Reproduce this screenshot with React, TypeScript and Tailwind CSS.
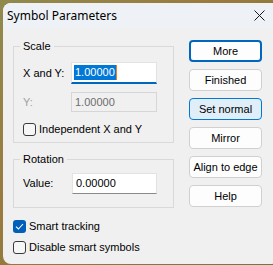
import React from "react";

const btnBase =
  "h-[22px] w-full rounded-[4px] border text-[11px] leading-none text-black flex items-center justify-center";

function Button({ label, kind }: { label: string; kind?: "default" | "hover" }) {
  const look =
    kind === "default"
      ? "bg-[#fdfdfd] border-[2px] border-[#0067c0]"
      : kind === "hover"
      ? "bg-[#e0eef9] border-[#0078d4]"
      : "bg-[#fdfdfd] border-[#d0d0d0]";
  return <button className={`${btnBase} ${look}`}>{label}</button>;
}

function Check({ checked, label }: { checked?: boolean; label: string }) {
  return (
    <label className="flex items-center h-[13px] gap-[3px]">
      {checked ? (
        <span className="w-[13px] h-[13px] rounded-[3px] bg-[#005fb8] flex items-center justify-center">
          <svg width="9" height="7" viewBox="0 0 9 7" fill="none">
            <path d="M1 3.6 L3.4 6 L8 1" stroke="white" strokeWidth="1.1" />
          </svg>
        </span>
      ) : (
        <span className="w-[13px] h-[13px] rounded-[3px] border border-[#3a3a3a] bg-[#f6f6f6]" />
      )}
      <span className="text-[11px] leading-none text-black">{label}</span>
    </label>
  );
}

export default function App() {
  return (
    <div className="w-[273px] h-[265px] overflow-hidden bg-[linear-gradient(135deg,#8f8a4c,#9b7a3d_40%,#6f7a3e)] pl-[3px] pt-[3px] font-['Liberation_Sans',Arial,sans-serif]">
      <div className="w-[276px] h-[261px] rounded-[8px] overflow-hidden bg-[#f0f0f0] flex flex-col">
        <div className="h-[25px] shrink-0 bg-[#eef2f7] flex items-center justify-between pl-[4px] pr-[14px]">
          <span className="text-[12px] text-black font-['Noto_Sans',sans-serif] leading-none">
            Symbol Parameters
          </span>
          <svg width="11" height="11" viewBox="0 0 11 11" fill="none">
            <path d="M0.5 0.5 L10.5 10.5 M10.5 0.5 L0.5 10.5" stroke="#1a1a1a" strokeWidth="1" />
          </svg>
        </div>

        <div className="flex pl-[10px]">
          <div className="w-[161px] flex flex-col">
            <fieldset className="mt-[12px] border border-[#d9d9d9] pl-[9px] pr-[16px] pt-[9px] pb-[6px]">
              <legend className="ml-[-3px] px-[3px] text-[11px] leading-[13px] text-black">Scale</legend>
              <div className="flex items-center h-[22px]">
                <span className="w-[48px] text-[11px] text-black">X and Y:</span>
                <div className="flex-1 h-[22px] bg-white border border-[#e3e3e3] border-b-[2px] border-b-[#0067c0] flex items-center pl-[2px]">
                  <span className="bg-[#0078d7] text-white text-[11px] leading-[15px] px-[1px]">1.00000</span>
                  <span className="w-[1px] h-[15px] bg-[#e8821e]" />
                </div>
              </div>
              <div className="flex items-center h-[20px] mt-[8px]">
                <span className="w-[48px] text-[11px] text-[#a0a0a0]">Y:</span>
                <div className="flex-1 h-[20px] border border-[#d6d6d6] flex items-center pl-[3px] text-[11px] text-[#6d6d6d]">
                  1.00000
                </div>
              </div>
              <div className="mt-[11px]">
                <Check label="Independent X and Y" />
              </div>
            </fieldset>

            <fieldset className="mt-[10px] border border-[#d9d9d9] pl-[9px] pr-[16px] pt-[7px] pb-[13px]">
              <legend className="ml-[-3px] px-[3px] text-[11px] leading-[13px] text-black">Rotation</legend>
              <div className="flex items-center h-[21px]">
                <span className="w-[49px] text-[11px] text-black">Value:</span>
                <div className="flex-1 h-[21px] bg-white border border-[#e3e3e3] border-b-[#8a8a8a] flex items-center pl-[3px] text-[11px] text-black">
                  0.00000
                </div>
              </div>
            </fieldset>

            <div className="mt-[12px] flex flex-col gap-[8px]">
              <Check checked label="Smart tracking" />
              <Check label="Disable smart symbols" />
            </div>
          </div>

          <div className="ml-[15px] mt-[12px] w-[73px] flex flex-col gap-[7px]">
            <Button label="More" kind="default" />
            <Button label="Finished" />
            <Button label="Set normal" kind="hover" />
            <Button label="Mirror" />
            <Button label="Align to edge" />
            <Button label="Help" />
          </div>
        </div>
      </div>
    </div>
  );
}
